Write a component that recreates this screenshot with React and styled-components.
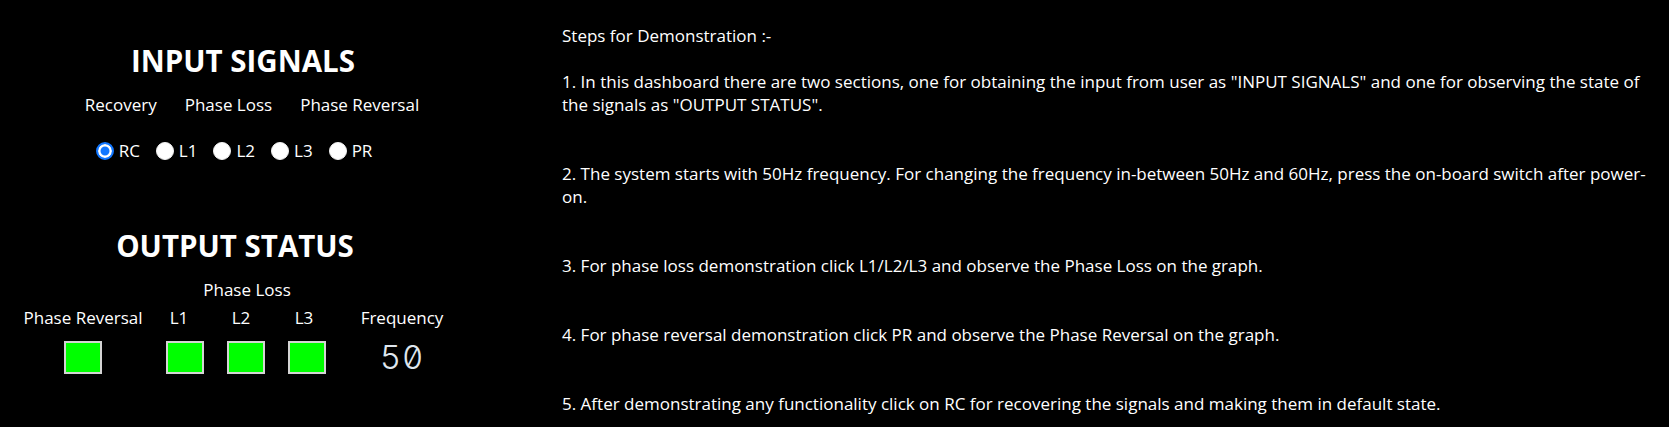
import React, { useState } from "react";
import styled, { createGlobalStyle } from "styled-components";

const GlobalStyle = createGlobalStyle`
  html, body {
    margin: 0;
    padding: 0;
    background: #000000;
  }
  body {
    font-family: "Open Sans", "Noto Sans", sans-serif;
    color: #ffffff;
  }
`;

const Page = styled.div`
  display: flex;
  height: 427px;
  overflow: hidden;
  background: #000000;
`;

const ControlPanel = styled.div`
  width: 490px;
  flex: none;
  display: flex;
  flex-direction: column;
  align-items: center;
  padding-top: 43px;
`;

const Heading = styled.h2`
  margin: 0;
  margin-top: ${(p) => p.$top || 0}px;
  font-size: 29.5px;
  line-height: 36px;
  font-weight: 700;
  transform: translateX(${(p) => p.$shift || 0}px);
`;

const LabelRow = styled.div`
  display: flex;
  gap: 28px;
  margin-top: 14px;
  font-size: 17px;
  line-height: 23px;
  transform: translateX(7px);
`;

const RadioRow = styled.div`
  display: flex;
  gap: 16px;
  margin-top: 23px;
  height: 23px;
  transform: translateX(-11px);
`;

const RadioItem = styled.label`
  display: flex;
  align-items: center;
  gap: 5px;
  font-size: 17px;
  line-height: 23px;
  cursor: pointer;
`;

const Radio = styled.input.attrs({ type: "radio" })`
  appearance: none;
  margin: 0;
  width: 18px;
  height: 18px;
  border-radius: 50%;
  background: #ffffff;
  border: 1px solid #f0f0f0;
  box-sizing: border-box;

  &:checked {
    background: #1277ff;
    border: 2px solid #1277ff;
    box-shadow: inset 0 0 0 2.5px #ffffff;
  }
`;

const StatusGrid = styled.div`
  display: grid;
  grid-template-columns: 120px 38px 38px 38px 106px;
  column-gap: 23px;
  margin-top: 14px;
  align-self: flex-start;
  margin-left: 23px;
  font-size: 17px;
  line-height: 23px;
`;

const GroupLabel = styled.div`
  grid-column: 2 / 5;
  text-align: center;
  transform: translateX(1px);
`;

const ColLabel = styled.div`
  grid-row: 2;
  text-align: center;
  white-space: nowrap;
  margin-top: 5px;
  justify-self: center;
  transform: translateX(${(p) => p.$shift || 0}px);
`;

const Lamp = styled.div`
  grid-row: 3;
  margin-top: 12px;
  width: 38px;
  height: 33px;
  box-sizing: border-box;
  border: 2px solid #d4d4d4;
  background: ${(p) => (p.$on ? "#00ff00" : "#404040")};
  justify-self: center;
`;

const FreqDisplay = styled.div`
  grid-row: 3;
  margin-top: 10px;
  justify-self: center;
  font-family: Inter, "DejaVu Sans Mono", monospace;
  font-weight: 300;
  font-size: 33px;
  line-height: 36px;
  letter-spacing: 1px;
  color: #dfe6ee;
  font-variant-numeric: slashed-zero tabular-nums;
`;

const Instructions = styled.div`
  flex: 1;
  padding: 24px 11px 0 72px;
  font-size: 17px;
  line-height: 23px;
`;

const StepsTitle = styled.div`
  margin-bottom: 23px;
`;

const Step = styled.p`
  margin: 0 0 46px 0;
`;

const inputs = [
  { id: "RC", label: "RC" },
  { id: "L1", label: "L1" },
  { id: "L2", label: "L2" },
  { id: "L3", label: "L3" },
  { id: "PR", label: "PR" },
];

const steps = [
  '1. In this dashboard there are two sections, one for obtaining the input from user as "INPUT SIGNALS" and one for observing the state of the signals as "OUTPUT STATUS".',
  "2. The system starts with 50Hz frequency. For changing the frequency in-between 50Hz and 60Hz, press the on-board switch after power-on.",
  "3. For phase loss demonstration click L1/L2/L3 and observe the Phase Loss on the graph.",
  "4. For phase reversal demonstration click PR and observe the Phase Reversal on the graph.",
  "5. After demonstrating any functionality click on RC for recovering the signals and making them in default state.",
];

export default function App() {
  const [signal, setSignal] = useState("RC");

  return (
    <Page>
      <GlobalStyle />
      <ControlPanel>
        <Heading $shift={-2}>INPUT SIGNALS</Heading>
        <LabelRow>
          <span>Recovery</span>
          <span>Phase Loss</span>
          <span>Phase Reversal</span>
        </LabelRow>
        <RadioRow>
          {inputs.map((s) => (
            <RadioItem key={s.id}>
              <Radio
                name="signal"
                checked={signal === s.id}
                onChange={() => setSignal(s.id)}
              />
              {s.label}
            </RadioItem>
          ))}
        </RadioRow>

        <Heading $top={66} $shift={-10}>
          OUTPUT STATUS
        </Heading>
        <StatusGrid>
          <GroupLabel>Phase Loss</GroupLabel>
          <ColLabel>Phase Reversal</ColLabel>
          <ColLabel $shift={-6}>L1</ColLabel>
          <ColLabel $shift={-5}>L2</ColLabel>
          <ColLabel $shift={-3}>L3</ColLabel>
          <ColLabel>Frequency</ColLabel>
          <Lamp $on />
          <Lamp $on />
          <Lamp $on />
          <Lamp $on />
          <FreqDisplay>50</FreqDisplay>
        </StatusGrid>
      </ControlPanel>

      <Instructions>
        <StepsTitle>Steps for Demonstration :-</StepsTitle>
        {steps.map((t) => (
          <Step key={t}>{t}</Step>
        ))}
      </Instructions>
    </Page>
  );
}
